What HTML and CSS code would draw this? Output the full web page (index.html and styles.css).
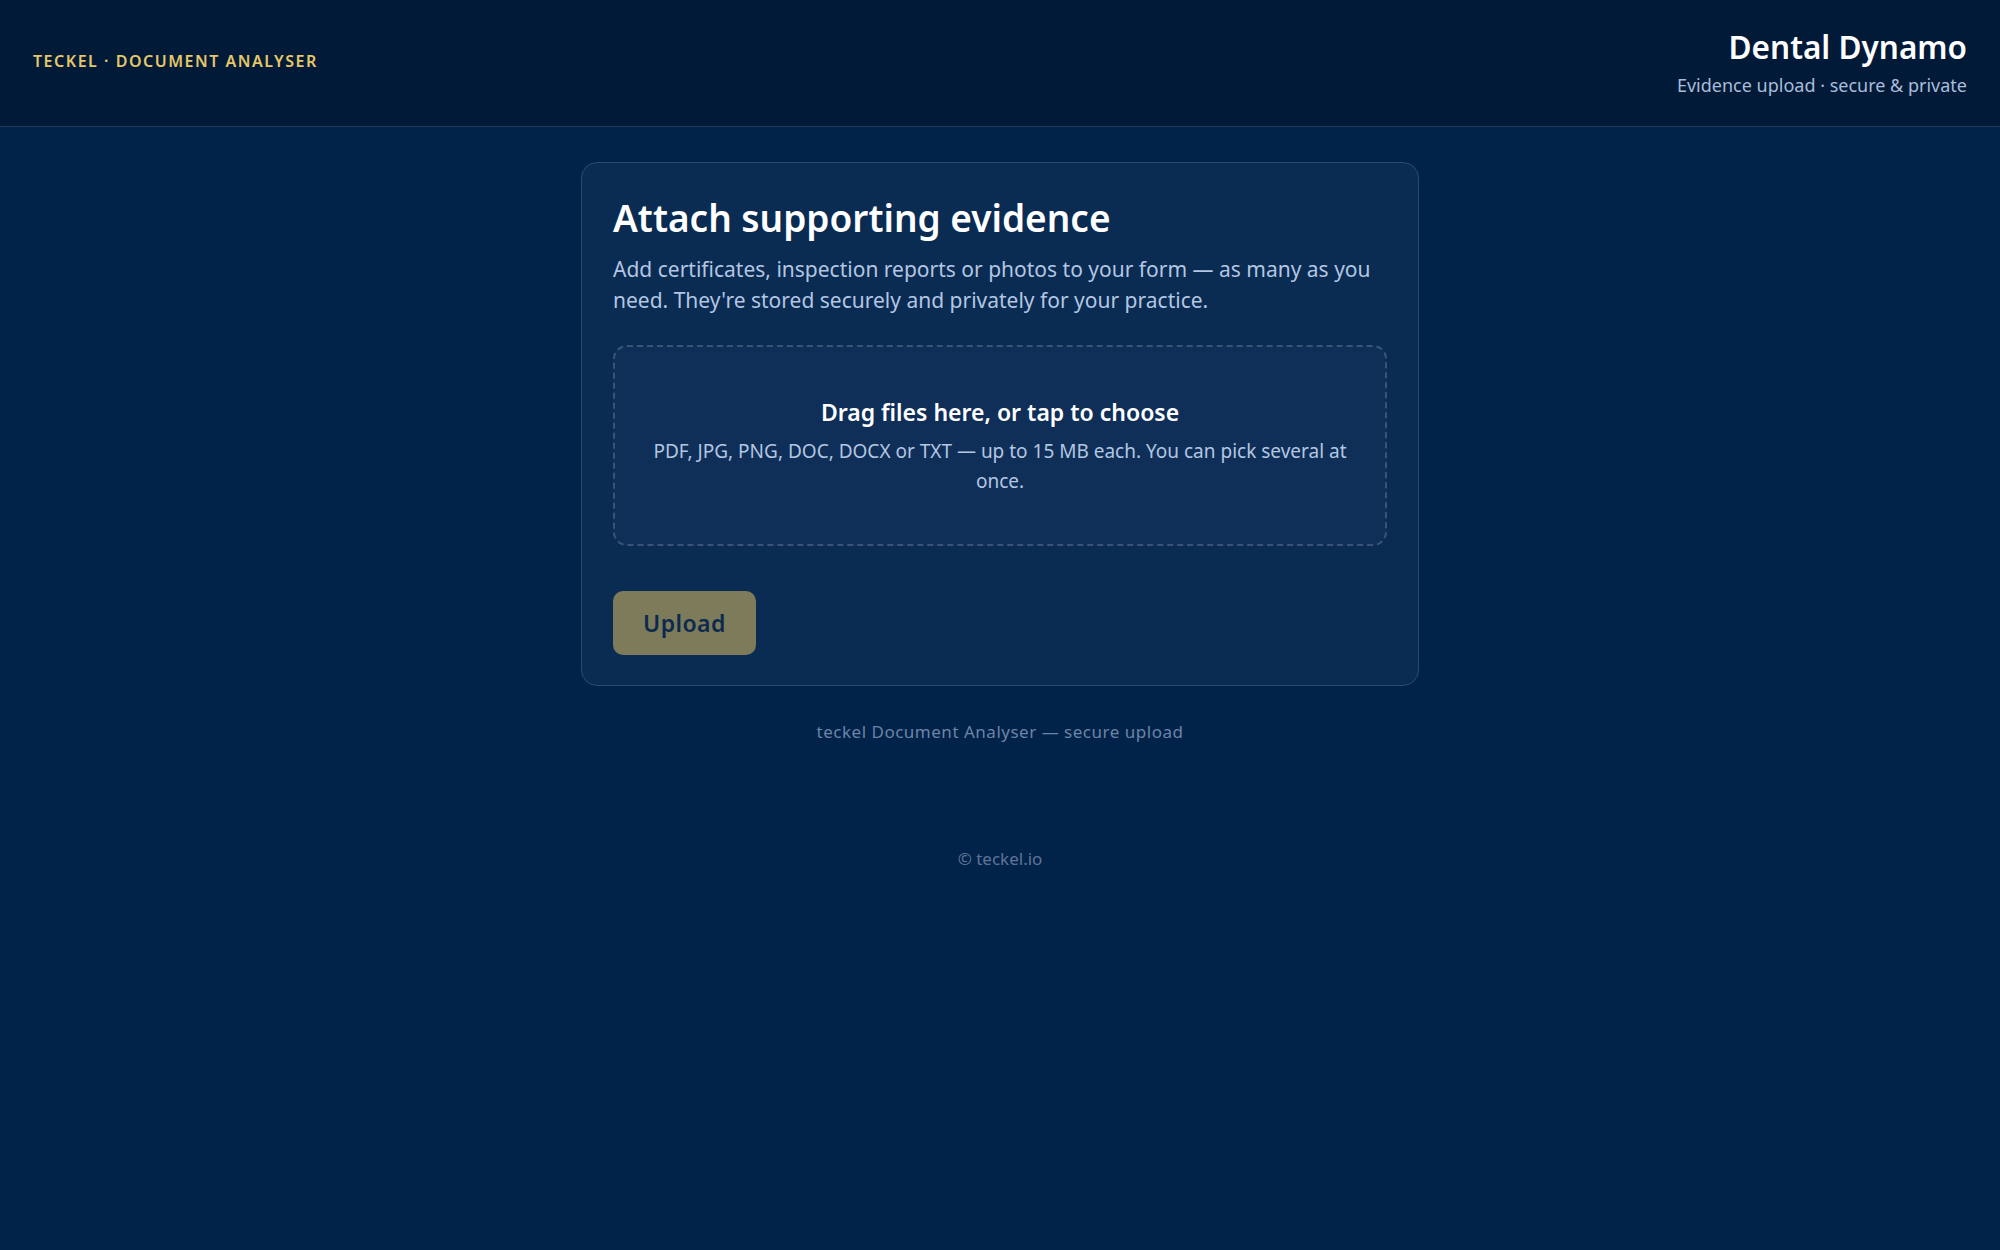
FILE: index.html
```html
<!DOCTYPE html>
<html>
<head>
    <title>Dental Dynamo · Evidence upload</title>
    <link rel="stylesheet" href="styles.css">
</head>
<body>
    <header class="topbar">
        <div class="brand">TECKEL · DOCUMENT ANALYSER</div>
        <div class="practice">
            <div class="practice-name">Dental Dynamo</div>
            <div class="practice-note">Evidence upload · secure &amp; private</div>
        </div>
    </header>

    <main class="page">
        <section class="card">
            <h1>Attach supporting evidence</h1>
            <p class="intro">Add certificates, inspection reports or photos to your form — as many as you need. They're stored securely and privately for your practice.</p>

            <label class="dropzone" for="fileInput">
                <input type="file" id="fileInput" multiple>
                <span class="drop-title">Drag files here, or tap to choose</span>
                <span class="drop-hint">PDF, JPG, PNG, DOC, DOCX or TXT — up to 15 MB each. You can pick several at once.</span>
            </label>

            <div class="actions">
                <button class="upload-btn" disabled>Upload</button>
            </div>
        </section>
        <p class="tagline">teckel Document Analyser — secure upload</p>
    </main>

    <footer class="footer">© teckel.io</footer>
</body>
</html>
```

FILE: styles.css
```css
* {
    box-sizing: border-box;
}

body {
    margin: 0;
    min-height: 100vh;
    background-color: #012249;
    color: #ffffff;
    font-family: "Noto Sans", "Open Sans", sans-serif;
}

/* top bar */
.topbar {
    height: 127px;
    display: flex;
    align-items: center;
    justify-content: space-between;
    padding: 0 33px;
    background-color: #011a37;
    border-bottom: 1px solid #213859;
}

.brand {
    margin-bottom: 5px;
    color: #e6c76a;
    font-size: 16px;
    font-weight: 600;
    letter-spacing: 0.095em;
}

.practice {
    text-align: right;
}

.practice-name {
    font-size: 31.5px;
    font-weight: 600;
    line-height: 36px;
}

.practice-note {
    margin-top: 8px;
    font-size: 18px;
    line-height: 25px;
    color: #a9bddb;
}

/* upload card */
.page {
    display: flex;
    flex-direction: column;
    align-items: center;
    padding-top: 35px;
}

.card {
    width: 838px;
    padding: 33px 31px 30px;
    background-color: #0a2b52;
    border: 1px solid #2b4a70;
    border-radius: 16px;
}

.card h1 {
    margin: 0 0 14px;
    font-size: 37px;
    font-weight: 600;
    line-height: 1.2;
}

.intro {
    margin: 0;
    font-size: 21px;
    line-height: 30.5px;
    color: #b3c6e2;
}

.dropzone {
    display: flex;
    flex-direction: column;
    align-items: center;
    margin-top: 30px;
    padding: 50px 24px 48px;
    background-color: #0f2f58;
    border: 2px dashed #3a5479;
    border-radius: 14px;
    text-align: center;
    cursor: pointer;
}

.dropzone input {
    display: none;
}

.drop-title {
    font-size: 23px;
    font-weight: 600;
    line-height: 31px;
}

.drop-hint {
    margin-top: 8px;
    font-size: 19px;
    line-height: 30px;
    color: #b3c6e2;
}

.actions {
    margin-top: 45px;
}

.upload-btn {
    padding: 16px 30px;
    background-color: #7d7b59;
    color: #0c2a50;
    border: none;
    border-radius: 10px;
    font-family: inherit;
    font-size: 23px;
    font-weight: 600;
    line-height: 32px;
    letter-spacing: 0.02em;
}

.tagline {
    margin: 34px 0 0;
    font-size: 17px;
    line-height: 24px;
    letter-spacing: 0.03em;
    color: #6d84a6;
}

.footer {
    padding-top: 103px;
    text-align: center;
    font-size: 17px;
    line-height: 24px;
    color: #5f7597;
}
```
